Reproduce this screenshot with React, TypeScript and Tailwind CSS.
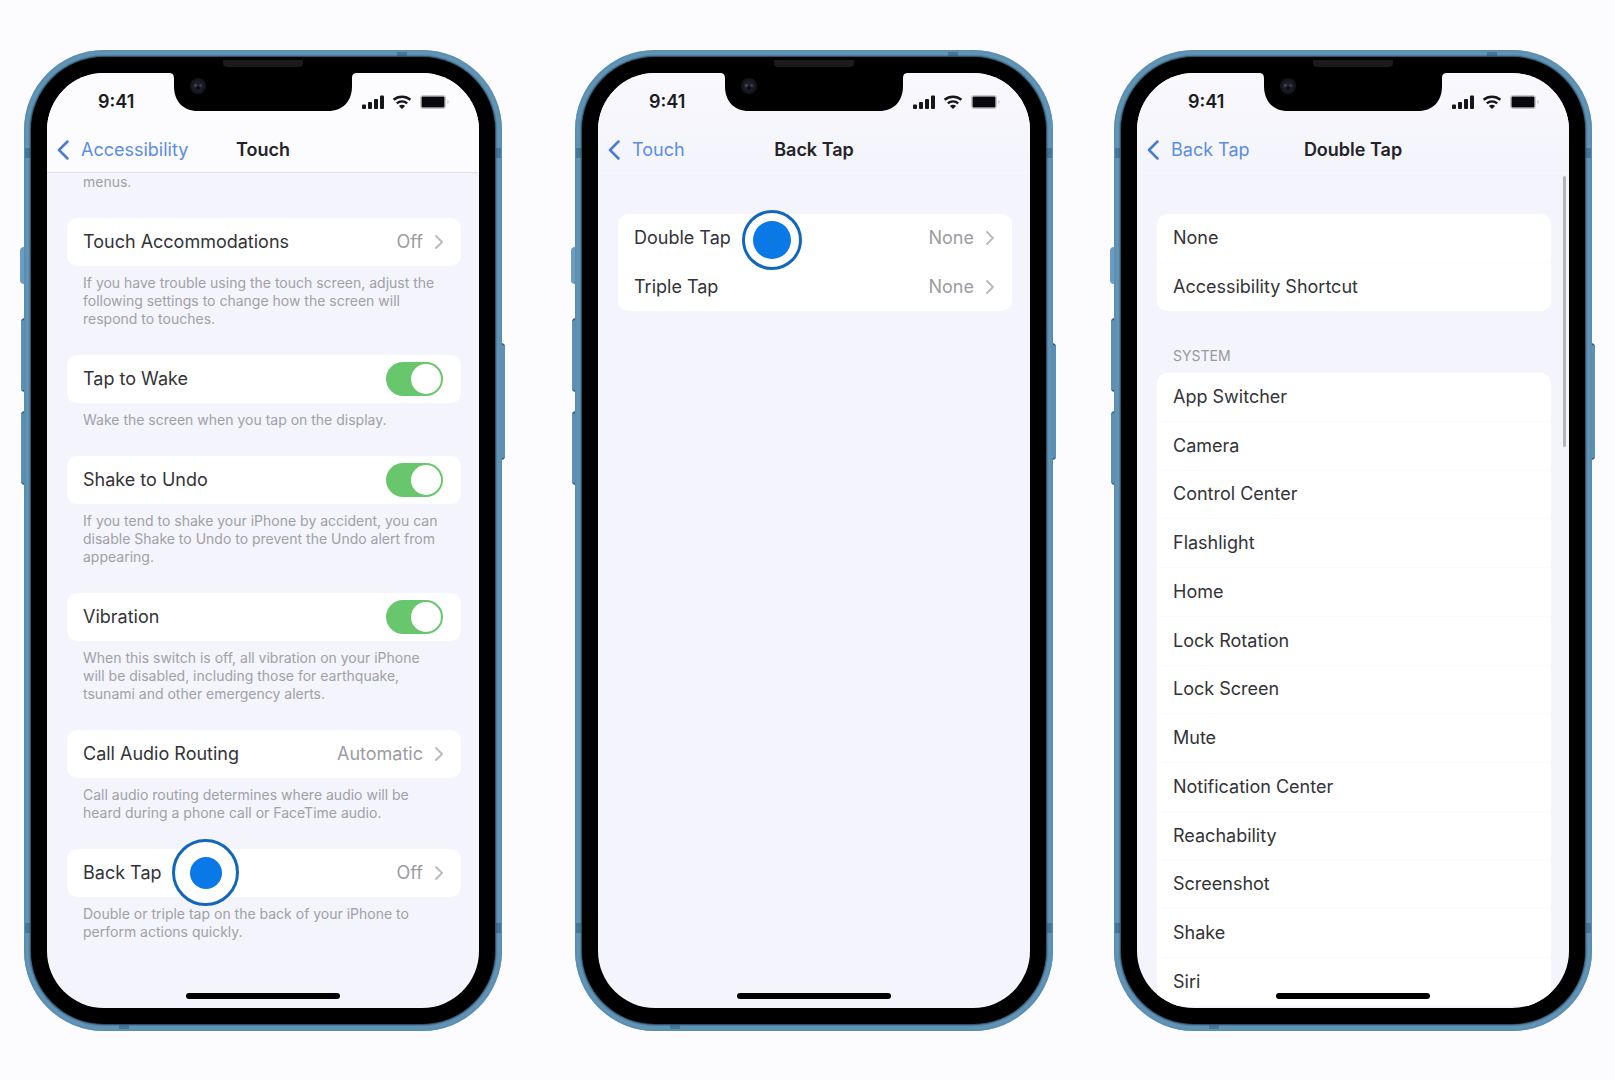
import type { ReactNode } from 'react';
import clsx from 'clsx';

type TouchSetting = {
  id: string;
  label: string;
  value?: string;
  tapped?: boolean;
  description: string[];
};

const touchSettings: TouchSetting[] = [
  {
    id: 'accommodations',
    label: 'Touch Accommodations',
    value: 'Off',
    description: [
      'If you have trouble using the touch screen, adjust the',
      'following settings to change how the screen will',
      'respond to touches.',
    ],
  },
  {
    id: 'tap-to-wake',
    label: 'Tap to Wake',
    description: ['Wake the screen when you tap on the display.'],
  },
  {
    id: 'shake-to-undo',
    label: 'Shake to Undo',
    description: [
      'If you tend to shake your iPhone by accident, you can',
      'disable Shake to Undo to prevent the Undo alert from',
      'appearing.',
    ],
  },
  {
    id: 'vibration',
    label: 'Vibration',
    description: [
      'When this switch is off, all vibration on your iPhone',
      'will be disabled, including those for earthquake,',
      'tsunami and other emergency alerts.',
    ],
  },
  {
    id: 'call-audio',
    label: 'Call Audio Routing',
    value: 'Automatic',
    description: [
      'Call audio routing determines where audio will be',
      'heard during a phone call or FaceTime audio.',
    ],
  },
  {
    id: 'back-tap',
    label: 'Back Tap',
    value: 'Off',
    tapped: true,
    description: [
      'Double or triple tap on the back of your iPhone to',
      'perform actions quickly.',
    ],
  },
];

const systemActions = [
  'App Switcher',
  'Camera',
  'Control Center',
  'Flashlight',
  'Home',
  'Lock Rotation',
  'Lock Screen',
  'Mute',
  'Notification Center',
  'Reachability',
  'Screenshot',
  'Shake',
  'Siri',
];

function Chevron() {
  return (
    <svg className="w-2 h-3.5 shrink-0" viewBox="0 0 8 14" fill="none" aria-hidden="true">
      <path d="M1 1l6 6-6 6" stroke="#b9b9be" strokeWidth="1.800" strokeLinecap="round" strokeLinejoin="round" />
    </svg>
  );
}

function StatusIcons() {
  return (
    <div className="flex items-center gap-2 text-[#15151c]">
      <svg className="w-[22px] h-3.5" viewBox="0 0 22 14" fill="currentColor" aria-hidden="true">
        <rect x="0" y="9.5" width="4" height="4.5" rx="1" />
        <rect x="6" y="7" width="4" height="7" rx="1" />
        <rect x="12" y="4" width="4" height="10" rx="1" />
        <rect x="18" y="0.5" width="4" height="13.5" rx="1" />
      </svg>
      <svg className="w-5 h-3.5" viewBox="0 0 20 14" fill="none" aria-hidden="true">
        <path d="M1.6 4.8c4.7-4.2 12.1-4.2 16.8 0" stroke="currentColor" strokeWidth="2.5" />
        <path d="M4.8 8.3c3-2.6 7.4-2.6 10.4 0" stroke="currentColor" strokeWidth="2.4" />
        <path d="M10 14l-3.1-3.1c1.8-1.5 4.4-1.5 6.2 0z" fill="currentColor" />
      </svg>
      <svg className="w-[30px] h-3.5" viewBox="0 0 30 14" fill="none" aria-hidden="true">
        <rect x="0.5" y="0.5" width="25" height="13" rx="2" stroke="#c4c4ca" />
        <rect x="1.5" y="1.5" width="23" height="11" rx="1" fill="#08080e" />
        <path d="M27.5 5v4c1.4-.5 1.4-3.5 0-4z" fill="#b4b4ba" />
      </svg>
    </div>
  );
}

function Notch() {
  return (
    <svg
      className="absolute top-[15px] left-1/2 -translate-x-1/2 w-[188px] h-[39px]"
      viewBox="0 0 188 39"
      aria-hidden="true"
    >
      <path d="M0 0h188v1c-4 0-5 2-5 6v7c0 15-9 25-24 25H29C14 39 5 29 5 14V7c0-4-1-6-5-6z" fill="#000" />
      <circle cx="29" cy="14" r="8" fill="#15151c" />
      <circle cx="29" cy="14" r="5.5" fill="#1d1d29" />
      <circle cx="26.5" cy="13.5" r="1.8" fill="#3d3d55" />
      <circle cx="31.5" cy="13.5" r="1.6" fill="#38384e" />
      <circle cx="29" cy="16" r="2" fill="#0c0c14" />
    </svg>
  );
}

function SideButtons() {
  return (
    <>
      <div className="absolute -left-1 top-[197px] w-1.5 h-[37px] rounded-l-sm bg-[#6a9dbf]" />
      <div className="absolute -left-[3px] top-[268px] w-1 h-[74px] rounded-l-sm bg-[#5c91b5] border-y-2 border-[#35607e]" />
      <div className="absolute -left-[3px] top-[361px] w-1 h-[74px] rounded-l-sm bg-[#5c91b5] border-y-2 border-[#35607e]" />
      <div className="absolute -right-[3px] top-[293px] w-1 h-[117px] rounded-r-sm bg-[#5c91b5] border-y-2 border-[#35607e]" />
    </>
  );
}

function AntennaBands() {
  return (
    <>
      <div className="absolute left-px top-[98px] w-[5px] h-2.5 bg-[#47769a]" />
      <div className="absolute right-px top-[98px] w-[5px] h-2.5 bg-[#47769a]" />
      <div className="absolute left-px bottom-[98px] w-[5px] h-2.5 bg-[#47769a]" />
      <div className="absolute right-px bottom-[98px] w-[5px] h-2.5 bg-[#47769a]" />
      <div className="absolute right-[95px] top-0.5 w-2.5 h-1 bg-[#47769a]" />
      <div className="absolute left-[95px] bottom-0.5 w-2.5 h-1 bg-[#47769a]" />
    </>
  );
}

type PhoneProps = {
  title: string;
  back: string;
  solidHeader?: boolean;
  className?: string;
  children: ReactNode;
};

function Phone({ title, back, solidHeader, className, children }: PhoneProps) {
  return (
    <section aria-label={title} className={clsx('relative flex-1 min-w-[400px] h-[981px]', className)}>
      <SideButtons />
      <div className="relative h-full rounded-[80px] bg-[#6296b8] p-[7px] shadow-[inset_0_0_3px_1px_#5788aa]">
        <AntennaBands />
        <div className="relative h-full rounded-[73px] bg-black p-4 shadow-[0_0_2px_1px_#1d3a4e]">
          {/* speaker */}
          <div className="absolute top-[3px] left-1/2 -translate-x-1/2 w-20 h-[7px] rounded-b-sm bg-[#1b1b1d]" />
          <div className="relative h-full rounded-[57px] overflow-hidden bg-[#f4f4fc] flex flex-col">
            <header
              className={clsx(
                'h-[100px] shrink-0 border-b',
                solidHeader ? 'bg-[#fcfbfe] border-[#dedee3]' : 'bg-linear-to-b from-[#f9f8fd] to-[#f4f4fc] border-transparent',
              )}
            >
              <div className="flex items-center justify-between h-[57px] pl-[51px] pr-[29px]">
                <span className="text-lg font-semibold text-[#1c1c20]">9:41</span>
                <StatusIcons />
              </div>
              <div className="grid grid-cols-[1fr_auto_1fr] items-center h-10 px-2.5 text-lg">
                <a href="#back" className="flex items-center gap-3 text-[#5a8de4]">
                  <svg className="w-3 h-5" viewBox="0 0 12 20" fill="none" aria-hidden="true">
                    <path d="M10.5 1.5L2 10l8.5 8.5" stroke="#4a7bd0" strokeWidth="2.5" strokeLinecap="round" strokeLinejoin="round" />
                  </svg>
                  {back}
                </a>
                <h1 className="font-semibold text-[#232327]">{title}</h1>
              </div>
            </header>
            {children}
            <div className="absolute bottom-[9px] left-1/2 -translate-x-1/2 w-[154px] h-1.5 rounded-full bg-black" />
          </div>
          <Notch />
        </div>
      </div>
    </section>
  );
}

function TapMarker({ large }: { large?: boolean }) {
  return (
    <span
      className={clsx(
        'absolute z-10 rounded-full bg-white border-[3px] border-[#1267bd] flex items-center justify-center',
        large ? '-top-2.5 left-[105px] size-[67px]' : '-top-1 left-[124px] size-[60px]',
      )}
    >
      <span className={clsx('rounded-full bg-[#0b78e8]', large ? 'size-8' : 'size-[38px]')} />
    </span>
  );
}

function LinkRow({ label, value, children }: { label: string; value?: string; children?: ReactNode }) {
  return (
    <button type="button" className="relative flex flex-1 min-h-12 w-full items-center pl-4 pr-[18px] text-left text-lg text-[#333337]">
      <span className="flex-1">{label}</span>
      {value && (
        <span className="flex items-center gap-3 text-[#9c9ca1]">
          {value}
          <Chevron />
        </span>
      )}
      {children}
    </button>
  );
}

function SwitchRow({ id, label }: { id: string; label: string }) {
  return (
    <div className="flex h-12 items-center justify-between pl-4 pr-[18px] text-lg text-[#333337]">
      <label htmlFor={id}>{label}</label>
      <input
        id={id}
        type="checkbox"
        role="switch"
        defaultChecked
        className="appearance-none flex items-center w-[57px] h-[34px] p-0.5 rounded-full bg-gray-300 checked:bg-[#68c76c] before:size-[30px] before:rounded-full before:bg-white checked:before:ml-[23px]"
      />
    </div>
  );
}

function TouchScreen() {
  return (
    <div className="pl-5 pr-[18px]">
      <p className="px-4 pb-[27px] text-sm leading-[18px] text-[#a0a0a7]">menus.</p>
      {touchSettings.map(({ id, label, value, tapped, description }) => (
        <div key={id}>
          <div className="rounded-[10px] bg-white flex flex-col">
            {value ? (
              <LinkRow label={label} value={value}>
                {tapped && <TapMarker large />}
              </LinkRow>
            ) : (
              <SwitchRow id={id} label={label} />
            )}
          </div>
          <p className="px-4 pt-2 pb-[27px] text-sm leading-[18px] text-[#a0a0a7] whitespace-nowrap">
            {description.map(line => (
              <span key={line} className="block">{line}</span>
            ))}
          </p>
        </div>
      ))}
    </div>
  );
}

function BackTapScreen() {
  return (
    <div className="pt-[41px] pl-5 pr-[18px]">
      <div className="flex flex-col h-[97px] rounded-[10px] bg-white">
        <LinkRow label="Double Tap" value="None">
          <TapMarker />
        </LinkRow>
        <LinkRow label="Triple Tap" value="None" />
      </div>
    </div>
  );
}

function DoubleTapScreen() {
  return (
    <div className="relative flex flex-1 flex-col pt-[41px] pl-5 pr-[18px] pb-0.5">
      <div className="flex flex-col h-[97px] rounded-[10px] bg-white divide-y divide-[#fcfcfd]">
        <LinkRow label="None" />
        <LinkRow label="Accessibility Shortcut" />
      </div>
      <h2 className="px-4 pt-9 pb-2 text-sm leading-[18px] text-[#98989f]">SYSTEM</h2>
      <div className="flex flex-1 flex-col rounded-t-[10px] bg-white divide-y divide-[#fbfbfd]">
        {systemActions.map(action => (
          <LinkRow key={action} label={action} />
        ))}
      </div>
      <div className="absolute right-[3px] top-[3px] w-[3px] h-[271px] rounded-full bg-[#b6b3bb]" />
    </div>
  );
}

export default function App() {
  return (
    <main className="flex min-h-screen items-start bg-[#fcfcfe] pt-[50px] pb-12 pl-6 pr-[23px] gap-[61px] font-['Inter',sans-serif]">
      <Phone title="Touch" back="Accessibility" solidHeader>
        <TouchScreen />
      </Phone>
      <Phone title="Back Tap" back="Touch" className="ml-3">
        <BackTapScreen />
      </Phone>
      <Phone title="Double Tap" back="Back Tap">
        <DoubleTapScreen />
      </Phone>
    </main>
  );
}
